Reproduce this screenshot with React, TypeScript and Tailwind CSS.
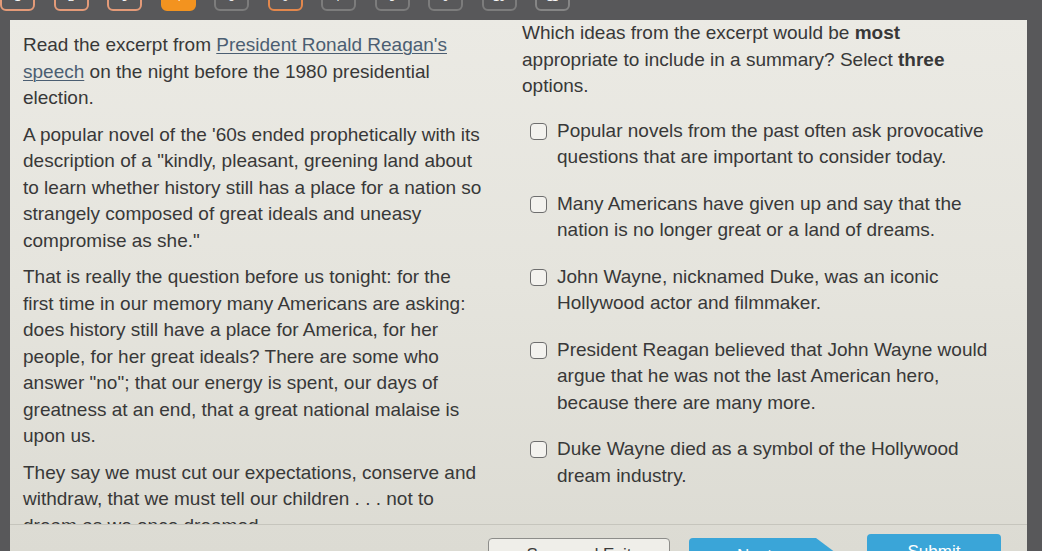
import React from 'react'

const tabs = [
  { n: '1', cls: 'border-[#e39a78]' },
  { n: '2', cls: 'border-[#e39a78]' },
  { n: '3', cls: 'border-[#e39a78]' },
  { n: '4', cls: 'border-[#f3931f] bg-[#f3931f]' },
  { n: '5', cls: 'border-[#7c7c7c]' },
  { n: '6', cls: 'border-[#e2874c]' },
  { n: '7', cls: 'border-[#7c7c7c]' },
  { n: '8', cls: 'border-[#7c7c7c]' },
  { n: '9', cls: 'border-[#7c7c7c]' },
  { n: '10', cls: 'border-[#7c7c7c]' },
  { n: '11', cls: 'border-[#858585]' },
]

const options = [
  'Popular novels from the past often ask provocative questions that are important to consider today.',
  'Many Americans have given up and say that the nation is no longer great or a land of dreams.',
  'John Wayne, nicknamed Duke, was an iconic Hollywood actor and filmmaker.',
  'President Reagan believed that John Wayne would argue that he was not the last American hero, because there are many more.',
  'Duke Wayne died as a symbol of the Hollywood dream industry.',
]

export default function App() {
  return (
    <div className="w-[1042px] h-[551px] overflow-hidden bg-[#58585a] flex flex-col font-['Liberation_Sans',Arial,sans-serif] text-[19px] leading-[26.5px] text-[#383838]">
      {/* question tabs, cut off by the photo */}
      <div className="h-[20px] shrink-0 flex gap-[18.5px] overflow-hidden">
        {tabs.map((t) => (
          <div
            key={t.n}
            className={`w-[35px] h-[28px] mt-[-17px] shrink-0 rounded-md border-2 flex items-center justify-center text-[11px] text-white ${t.cls}`}
          >
            {t.n}
          </div>
        ))}
      </div>

      <div className="flex-1 ml-[10px] mr-[15px] flex flex-col bg-linear-to-b from-[#ebeae4] via-[#e5e4dd] to-[#dcdbd3] min-h-0">
        <div className="h-[504px] shrink-0 overflow-hidden grid grid-cols-[512px_1fr]">
          <div className="pl-[13px] pt-[12px]">
            <div className="w-[460px]">
              <p>
                Read the excerpt from{' '}
                <span className="text-[#4b5e72] underline underline-offset-2 decoration-[1px]">
                  President Ronald Reagan's speech
                </span>{' '}
                on the night before the 1980 presidential election.
              </p>
              <p className="mt-[10px]">
                A popular novel of the '60s ended prophetically with its description of a "kindly,
                pleasant, greening land about to learn whether history still has a place for a
                nation so strangely composed of great ideals and uneasy compromise as she."
              </p>
              <p className="mt-[10px]">
                That is really the question before us tonight: for the first time in our memory
                many Americans are asking: does history still have a place for America, for her
                people, for her great ideals? There are some who answer "no"; that our energy is
                spent, our days of greatness at an end, that a great national malaise is upon us.
              </p>
              <p className="mt-[10px]">
                They say we must cut our expectations, conserve and withdraw, that we must tell our
                children . . . not to dream as we once dreamed.
              </p>
            </div>
          </div>

          <div>
            <p className="w-[440px]">
              Which ideas from the excerpt would be <b>most</b> appropriate to include in a
              summary? Select <b>three</b> options.
            </p>
            <div className="mt-[18px] flex flex-col gap-[20px]">
              {options.map((o) => (
                <label key={o} className="flex items-start gap-[10px] pl-[8px]">
                  <span className="mt-[5px] w-[17px] h-[17px] shrink-0 rounded-[4px] border-[1.5px] border-[#6e6e6e] bg-[#f3f2ee]" />
                  <span className="w-[445px]">{o}</span>
                </label>
              ))}
            </div>
          </div>
        </div>

        <div className="border-t border-[#c6c5bd] flex-1 flex items-start pt-[13px] pl-[478px] gap-[19px]">
          <button className="w-[182px] h-[34px] shrink-0 rounded-[4px] border border-[#8d8d8a] bg-[#efeee9] text-[17px] text-[#3a3a3a]">
            Save and Exit
          </button>
          <button className="w-[151px] h-[36px] shrink-0 rounded-l-[4px] bg-[#3aa5d8] text-white text-[17px] pr-[20px] [clip-path:polygon(0_0,calc(100%-24px)_0,100%_50%,calc(100%-24px)_100%,0_100%)]">
            Next
          </button>
          <button className="w-[134px] h-[36px] shrink-0 ml-[8px] mt-[-4px] rounded-[4px] bg-[#3aa5d8] text-white text-[17px]">
            Submit
          </button>
        </div>
      </div>
    </div>
  )
}
